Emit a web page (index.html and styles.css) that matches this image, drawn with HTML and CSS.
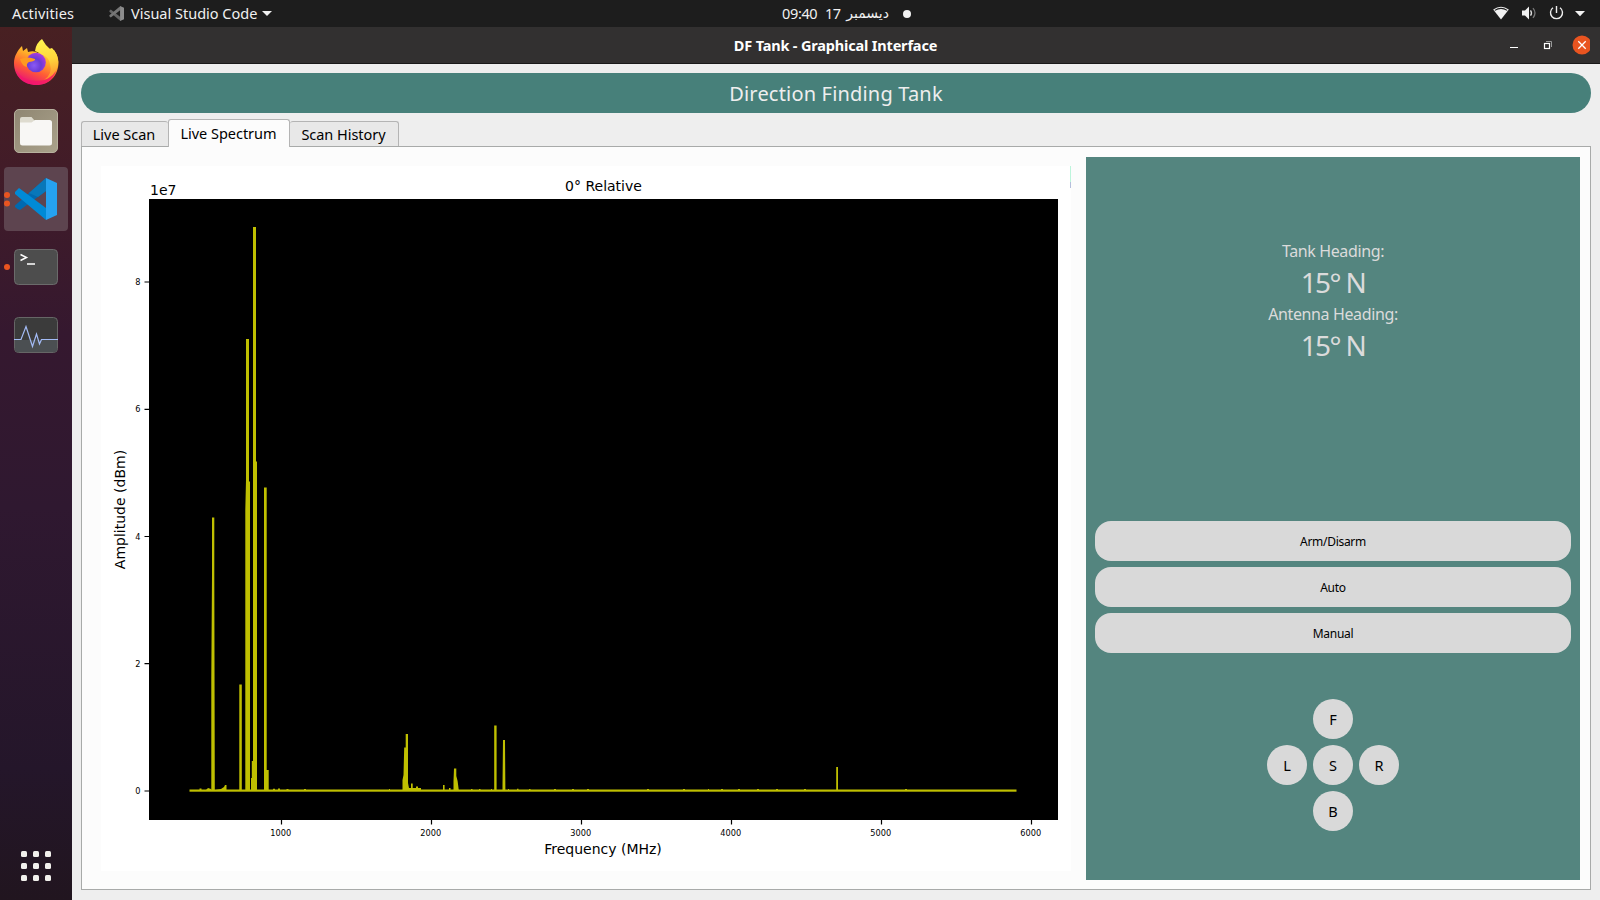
FILE: index.html
```html
<!DOCTYPE html>
<html lang="en">
<head>
<meta charset="utf-8">
<title>DF Tank - Graphical Interface</title>
<link rel="stylesheet" href="styles.css">
</head>
<body>
<header class="topbar">
  <div class="topbar-left">
    <span class="activities">Activities</span>
    <svg class="app-icon" width="15" height="15" viewBox="0 0 42 42"><path fill="#666" d="M1 13 5 10 32 31V42L1 16Z"/><path fill="#777" d="M1 29 5 32 32 11V0L1 26Z"/><path fill="#8c8c8c" d="M31 0 42 5V37L31 42Z"/></svg>
    <span class="app-name">Visual Studio Code</span>
    <i class="caret"></i>
  </div>
  <div class="clock"><span class="time">09:40</span><span class="day">17</span><span class="month" dir="rtl">ديسمبر</span><i class="dot"></i></div>
  <svg class="tray" width="100" height="27" viewBox="1490 0 100 27">
    <path d="M1493.2 9.5Q1501 4 1508.8 9.5L1501 19.5Z" fill="#f2f2f2"/>
    <path d="M1494.8 10.4Q1501 6.3 1507.2 10.4" fill="none" stroke="#1d1d1d" stroke-width="1.1"/>
    <path d="M1522 10.500h3l4-4v13l-4-4h-3z" fill="#f2f2f2"/>
    <path d="M1530.500 10.300q2 2.700 0 5.400" fill="none" stroke="#ddd" stroke-width="1.3"/><path d="M1533 8.200q4 4.800 0 9.600" fill="none" stroke="#777" stroke-width="1.3"/>
    <path d="M1553 7.800a6 6 0 1 0 7 0M1556.500 6v7" fill="none" stroke="#eee" stroke-width="1.4"/>
    <path d="M1575 11h10l-5 5.200z" fill="#f2f2f2"/>
  </svg>
</header>
<div class="desktop">
  <nav class="dock">
    <div class="tile"><svg width="64" height="64" viewBox="4 31 64 64">
      <defs>
        <linearGradient id="fx" x1=".8" y1="0" x2=".3" y2="1"><stop offset="0" stop-color="#fff14a"/><stop offset=".35" stop-color="#ffad28"/><stop offset=".65" stop-color="#ff5a36"/><stop offset="1" stop-color="#e60a80"/></linearGradient>
        <radialGradient id="gl" cx=".4" cy=".65" r=".65"><stop offset="0" stop-color="#8a59f5"/><stop offset=".55" stop-color="#6a3bd6"/><stop offset="1" stop-color="#a83be0"/></radialGradient>
        <linearGradient id="tail" x1=".5" y1="0" x2=".6" y2="1"><stop offset="0" stop-color="#fff44f"/><stop offset=".5" stop-color="#ffd63c"/><stop offset="1" stop-color="#ff8a2c"/></linearGradient>
      </defs>
      <path fill="url(#fx)" d="M14 63C14 56 18 50 22 46L23 51 27 48 28 52Q34 50 38 53L52 48Q58 54 58.500 62C58.500 76 49 85 36.500 85 23 85 14 76 14 63Z"/>
      <path fill="url(#tail)" d="M42 39Q45 45 51 50L54 50Q59 57 58 65 55 77 44 80 53 74 50 64 49 57 42 55 38 52 35 51 36 43 42 39Z"/>
      <circle cx="36" cy="62.500" r="9.800" fill="url(#gl)"/>
      <path fill="#ff9a20" d="M20 59Q28 56 35 59 36 61 29 62 26 64 27 67 22 66 20 59Z"/>
      <path fill="#f5156c" opacity=".75" d="M15 69Q22 81 36 81 50 81 56 71 51 85 36 85 20 84 15 69Z"/>
    </svg></div>
    <div class="tile"><svg width="64" height="64" viewBox="4 99 64 64">
      <linearGradient id="fl" x1="0" y1="0" x2="1" y2="1"><stop offset="0" stop-color="#8f8672"/><stop offset="1" stop-color="#aaa28b"/></linearGradient>
      <rect x="14.500" y="109.500" width="43" height="43" rx="4.500" fill="url(#fl)" stroke="#b7b19e"/>
      <path fill="#dedbcf" d="M20 124v-5q0-2 2-2h9.500l3 3.500h15v3.500z"/><path fill="#f8f7f5" d="M20 122.500h11.500l3.500-2.500h14.500q2.500 0 2.500 2.500v20.500q0 2.500-2.500 2.500h-27q-2.500 0-2.500-2.500z"/>
    </svg></div>
    <div class="tile active"><i class="run two"></i><svg width="64" height="64" viewBox="4 167 64 64">
      <path fill="#0069b0" d="M15 205.500 46 178V191L20 210Q18 210 15 207Z"/>
      <path fill="#0877b9" d="M29 193 46 178V191L38 197Z"/>
      <path fill="#008ad6" d="M15 192 19 188 46 208V220L15 194Z"/>
      <path fill="#25a2f0" d="M46 178 57 183V215L46 220Z"/>
    </svg></div>
    <div class="tile"><i class="run"></i><svg width="64" height="64" viewBox="4 235 64 64">
      <rect x="14.500" y="249.500" width="43" height="35" rx="4" fill="#4d4d4d" stroke="#6b6b6b"/>
      <path d="M20.500 254.500l6 3-6 3M27 264h8" fill="none" stroke="#fff" stroke-width="1.500"/>
    </svg></div>
    <div class="tile"><svg width="64" height="64" viewBox="4 303 64 64">
      <rect x="14.500" y="317.500" width="43" height="35" rx="4" fill="#3b3b3b" stroke="#666"/><path d="M15 340h42v9q0 3-3 3h-36q-3 0-3-3z" fill="#4b4f52"/>
      <path d="M14 339.500h7l5-13 6.500 20 4-12.500 3 10 2-4.500h16.500" fill="none" stroke="#a3bbf5" stroke-width="1.200"/>
    </svg></div>
    <div class="apps"><i></i><i></i><i></i><i></i><i></i><i></i><i></i><i></i><i></i></div>
  </nav>
  <main class="window">
    <div class="titlebar">
      <span class="win-title">DF Tank - Graphical Interface</span>
      <svg class="controls" width="90" height="36" viewBox="1500 27 90 36">
        <path d="M1510 47.500h8" stroke="#fff"/><rect x="1544.500" y="43.500" width="5" height="5" fill="none" stroke="#fff" stroke-width="1.200"/><path d="M1546 41.500h5.500v5.500" fill="none" stroke="#999"/>
        <circle cx="1582" cy="45" r="9.500" fill="#e95420"/><path d="M1578.300 41.300l7.400 7.400M1585.700 41.300l-7.400 7.400" stroke="#fff" stroke-width="1.300"/>
      </svg>
    </div>
    <div class="content">
      <h1 class="banner"><span>Direction Finding Tank</span></h1>
      <div class="tabs"><div class="tab t1"><span>Live Scan</span></div><div class="tab t2 selected"><span>Live Spectrum</span></div><div class="tab t3"><span>Scan History</span></div></div>
      <section class="pane">
        <svg class="chart" width="970" height="705" viewBox="101 166 970 705">
          <rect x="101" y="166" width="970" height="705" fill="#fff"/>
          <path d="M1070.500 166v16" stroke="#bdf5dc"/><path d="M1070.500 182v6" stroke="#b5bfdc"/>
          <rect x="149" y="199" width="909" height="621"/>
          <g stroke="#000" stroke-width="1.200"><path d="M144.500 282h4.500M144.500 409.300h4.500M144.500 536.500h4.500M144.500 663.700h4.500M144.500 791h4.500M281.500 820v4.500M431.500 820v4.500M581.500 820v4.500M731.500 820v4.500M881.500 820v4.500M1031.500 820v4.500"/></g>
          <g class="ticks" text-anchor="end"><text x="140.500" y="285">8</text><text x="140.500" y="412">6</text><text x="140.500" y="539.500">4</text><text x="140.500" y="666.500">2</text><text x="140.500" y="794">0</text></g>
          <g class="ticks" text-anchor="middle"><text x="280.700" y="836">1000</text><text x="430.700" y="836">2000</text><text x="580.700" y="836">3000</text><text x="730.700" y="836">4000</text><text x="880.700" y="836">5000</text><text x="1030.700" y="836">6000</text></g>
          <g class="labels"><text x="150" y="195">1e7</text><text x="603.500" y="191" text-anchor="middle">0° Relative</text><text x="603" y="854" text-anchor="middle">Frequency (MHz)</text><text transform="translate(125 509.500) rotate(-90)" text-anchor="middle">Amplitude (dBm)</text></g>
          <g fill="#bfbf00">
            <rect x="189.500" y="789.500" width="827" height="2.200"/>
            <path d="M211.300 791V677l.7-102V517.500h2.300V575l.5 216ZM239.300 791V684.500h2.500V791ZM245.300 791V510l.7-30V339h3V481l1 1V791ZM253 791V227h3V461l1 1V791ZM251 791V778h.8v-17H253v30ZM264 791V487.500h2.700V770h2v21Z"/>
            <path d="M402.500 791V780l1-5 .7-27.500h1.500V734h2.300V783l1 5h2v-4.500h1.700V788h3.300v-1.500h2V788h3v3ZM443 791v-6h1.600v6ZM449 791v-3h1.500v3ZM453.500 791V781l.5-12.500h2.300V776l1.300 5 1.300 10ZM494.200 791V725.500h2.400V791ZM502.500 791V786l.5-46h2V742l.4 49ZM836.200 791V767h1.800v24Z"/>
            <path d="M205 791l3-3 3 1v2ZM215 790l6-1 3-2 1-2h1.500v5ZM199.500 788.500h2v2h-2zM273 788.800h2v2h-2zM278 788.500h2v2h-2zM286.500 789h2v2h-2zM304 789h2v2h-2zM389 789h1v2h-1zM471 789h1.500v2H471zM479 789h1.500v2H479zM491 789h1v2h-1zM508 789h1v2h-1zM517 788.800h1.500v2H517zM529 789h1.500v2H529zM554 789h2v2h-2zM572 789h2v2h-2zM587 789h2v2h-2zM647 789h2v2h-2zM683 789h2v2h-2zM708 789h1v2h-1zM721 789h2v2h-2zM738 789h2v2h-2zM757 789h2v2h-2zM776 789h2v2h-2zM804 789h2v2h-2zM905 789h2v2h-2z"/>
          </g>
        </svg>
        <aside class="panel">
          <div class="readouts">
            <span class="cap">Tank Heading:</span><span class="val">15° N</span>
            <span class="cap">Antenna Heading:</span><span class="val">15° N</span>
          </div>
          <div class="actions"><button>Arm/Disarm</button><button>Auto</button><button>Manual</button></div>
          <div class="pad"><button class="f">F</button><button class="l">L</button><button class="s">S</button><button class="r">R</button><button class="b">B</button></div>
        </aside>
      </section>
    </div>
  </main>
</div>
</body>
</html>
```
FILE: styles.css
```css
* { box-sizing: border-box; }
body { margin: 0; width: 1600px; height: 900px; overflow: hidden; display: flex; flex-direction: column; font-family: "Noto Sans", "Open Sans", sans-serif; font-size: 14.5px; color: #000; }
svg { display: block; flex: none; }
button { border: 0; padding: 0; color: #000; font-family: inherit; background: #d9d9d9; }
span { white-space: nowrap; }
.topbar { flex: none; height: 27px; background: #1d1d1d; color: #f0f0f0; display: grid; grid-template-columns: 782px 1fr auto; line-height: 24px; padding-right: 10px; }
.topbar-left { display: flex; align-items: center; padding-left: 12px; }
.topbar span { padding-bottom: 2px; }
.activities { width: 97px; letter-spacing: .18px; }
.app-icon { margin-right: 7px; }
.app-name { width: 126px; letter-spacing: 0; }
.caret { border: 5px solid transparent; border-top-color: #f0f0f0; border-bottom: 0; margin-left: 5px; }
.clock { display: flex; align-items: center; }
.time { width: 43px; letter-spacing: -.35px; }
.day { width: 21px; letter-spacing: -.5px; }
.month { width: 43px; font-family: "DejaVu Sans", sans-serif; font-size: 14px; }
.dot { width: 8px; height: 8px; border-radius: 50%; background: #f2f2f2; margin-left: 14px; }
.desktop { flex: 1; display: flex; min-height: 0; }
.dock { width: 72px; flex: none; padding: 4px 4px 19px; display: flex; flex-direction: column; gap: 4px; background: linear-gradient(#482022, #421c28 16%, #35182f 35%, #2f1830 55%, #24162a 85%, #21151f); }
.tile { width: 64px; height: 64px; border-radius: 4px; position: relative; }
.tile.active { background: #5d444f; }
.run { position: absolute; left: 0; top: 29px; width: 6px; height: 6px; border-radius: 50%; background: #e95420; }
.run.two { top: 24.500px; box-shadow: 0 8.500px #e95420; }
.apps { margin: auto 0 0 17px; display: grid; grid-template: repeat(3, 6px) / repeat(3, 6px); gap: 6px; }
.apps i { background: #f1f0ec; border-radius: 1.5px; }
.window { flex: 1; display: flex; flex-direction: column; background: #eee; }
.titlebar { height: 37px; flex: none; background: #323030; border-bottom: 1px solid #1a1919; display: grid; grid-template-columns: 90px 1fr 90px; padding-right: 10px; color: #fff; }
.win-title { grid-column: 2; text-align: center; font-weight: 700; font-size: 14.5px; line-height: 36px; letter-spacing: -.17px; padding-left: 9px; }
.content { flex: 1; display: flex; flex-direction: column; padding: 9px 9px 10px; }
.banner { margin: 0; height: 40px; border-radius: 20px; background: #47807a; color: #eee; text-align: center; font-weight: 400; font-size: 20px; line-height: 41px; letter-spacing: .18px; }
.tabs { height: 33px; display: flex; align-items: flex-end; }
.tab { height: 25px; border: 1px solid #b4b4b4; border-bottom: 0; border-radius: 3px 3px 0 0; background: #e8e8e8; text-align: center; line-height: 25px; letter-spacing: -.03px; }
.t1 { width: 87px; border-right: 0; padding-right: 2px; }
.t2 { width: 122px; padding-right: 1px; }
.t3 { width: 109px; border-left: 0; padding-right: 1px; }
.tab.selected { height: 28px; margin-bottom: -1px; background: #fcfcfc; z-index: 1; line-height: 27px; }
.pane { flex: 1; border: 1px solid #a8aaa9; background: #fcfcfc; display: flex; padding: 10px 10px 9px 19px; gap: 15px; }
.chart { margin-top: 9px; }
.chart text { font-family: "DejaVu Sans", sans-serif; }
.ticks { font-size: 8.2px; }
.labels { font-size: 14px; }
.panel { flex: 1; background: #54857f; padding: 78px 9px 0; display: flex; flex-direction: column; }
.readouts { display: flex; flex-direction: column; align-items: center; color: #dbdbdb; height: 286px; }
.cap { font-size: 16px; line-height: 32px; height: 31px; letter-spacing: -.38px; }
.val { font-size: 28px; line-height: 33px; height: 32px; letter-spacing: -1.6px; }
.actions { display: flex; flex-direction: column; gap: 6px; }
.actions button { height: 40px; border-radius: 16px; font-size: 12px; letter-spacing: -.3px; }
.pad { display: grid; grid-template: repeat(3, 40px) / repeat(3, 40px); gap: 6px; justify-content: center; margin-top: 46px; grid-template-areas: ". f ." "l s r" ". b ."; }
.pad button { border-radius: 50%; font-size: 14.5px; padding-bottom: 1px; }
.f { grid-area: f; } .l { grid-area: l; } .s { grid-area: s; } .r { grid-area: r; } .b { grid-area: b; }
```
